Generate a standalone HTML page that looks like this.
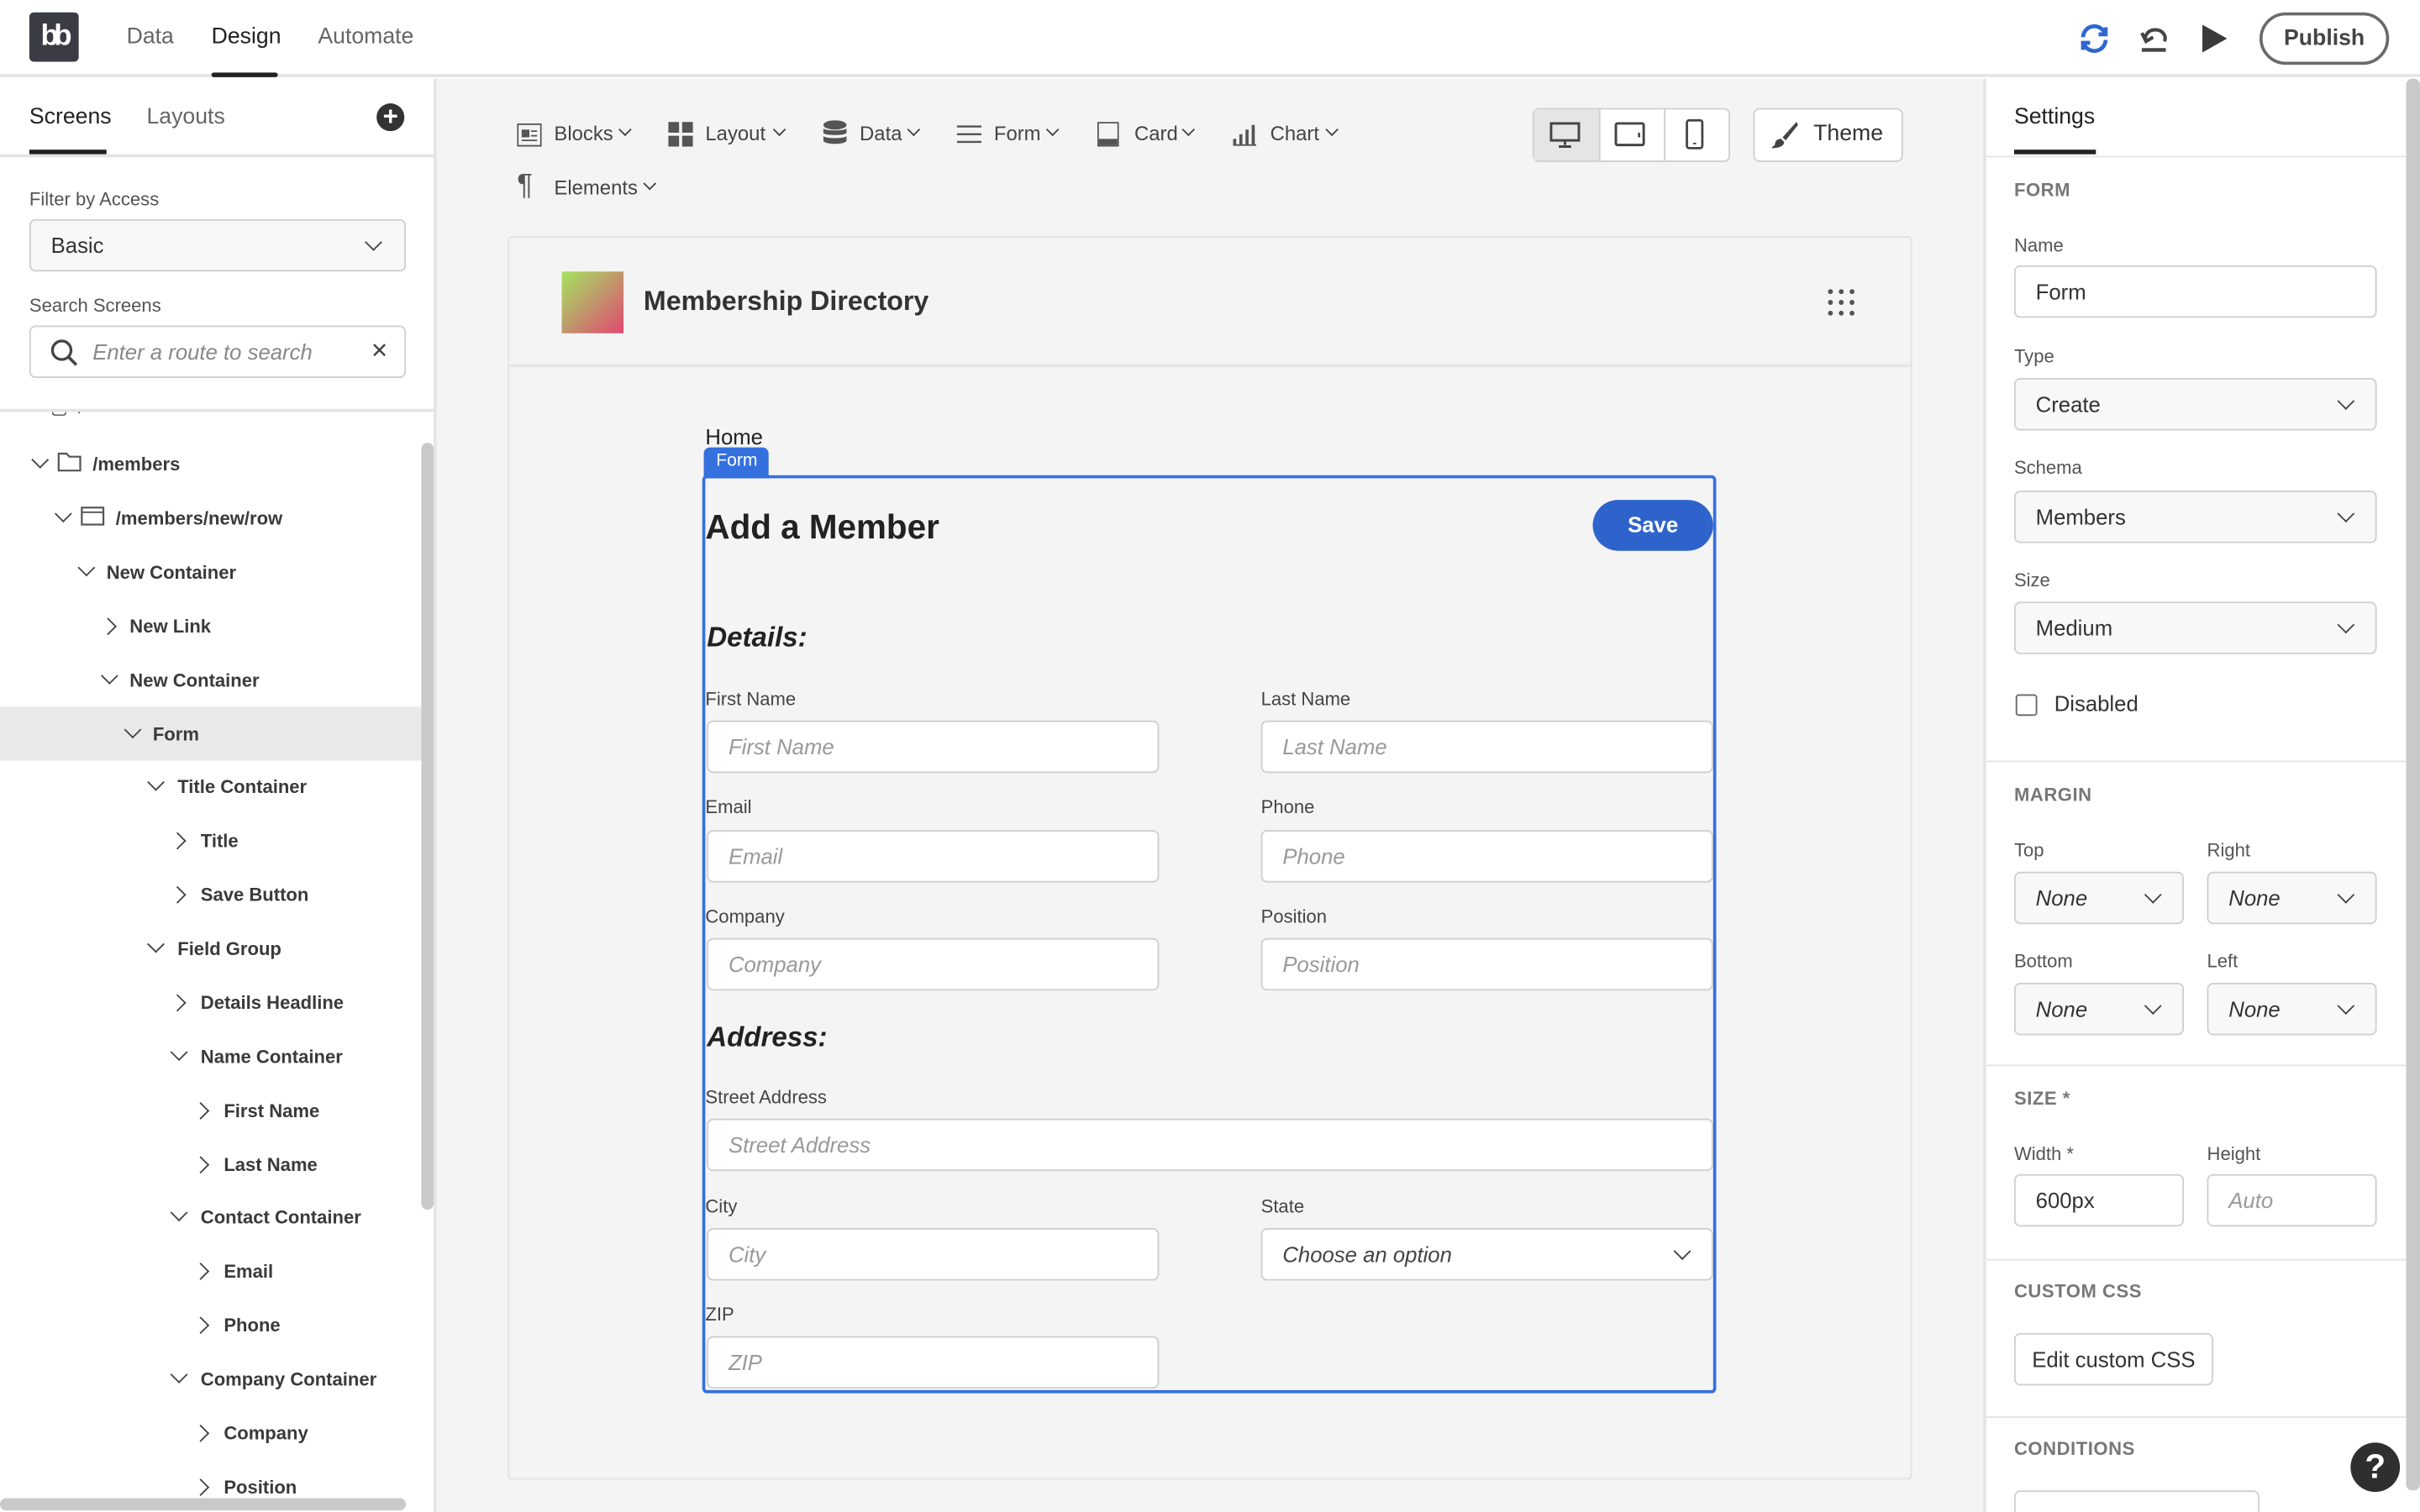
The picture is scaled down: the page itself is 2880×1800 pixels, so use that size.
<!DOCTYPE html>
<html><head><meta charset="utf-8"><style>
*{box-sizing:border-box;margin:0;padding:0}
html,body{width:2880px;height:1800px;overflow:hidden;background:#fff}
#w{position:absolute;left:0;top:0;width:1568px;height:980px;transform:scale(1.836735);transform-origin:0 0;font-family:"Liberation Sans",sans-serif;color:#2c2c2c;font-size:13px;overflow:hidden}
.a{position:absolute}
.t{position:absolute;white-space:nowrap}
.inp{position:absolute;background:#fff;border:1px solid #cfcfcf;border-radius:4px;height:34px;font-size:14px;line-height:32px;padding-left:13px;color:#999;font-style:italic}
.sel{position:absolute;background:#f8f8f8;border:1px solid #cfcfcf;border-radius:4px;height:34px;font-size:14px;line-height:32px;padding-left:13px;color:#333}
.chev{position:absolute;width:8px;height:8px;border-right:1.6px solid #444;border-bottom:1.6px solid #444;transform:rotate(45deg)}
.tr{position:absolute;font-size:12px;font-weight:bold;color:#3a3a3a;white-space:nowrap}
.lbl{position:absolute;font-size:12px;color:#444;white-space:nowrap}
.sl{position:absolute;font-size:12px;color:#555;white-space:nowrap}
.sh{position:absolute;font-size:12px;font-weight:bold;color:#777;letter-spacing:.3px}
</style></head><body><div id="w">
<!-- top bar -->
<div class="a" style="left:0;top:0;width:1568px;height:50px;border-bottom:2px solid #e4e4e4;background:#fff"></div>
<div class="a" style="left:19px;top:8px;width:32px;height:32px;background:#393c44;border-radius:3px;color:#fff;font-weight:bold;font-size:19px;line-height:31px;text-align:center;letter-spacing:-3px">bb</div>
<div class="t" style="left:82px;top:16px;font-size:14.5px;color:#666">Data</div>
<div class="t" style="left:137px;top:16px;font-size:14.5px;color:#222">Design</div>
<div class="a" style="left:137px;top:47px;width:43px;height:3px;background:#222;border-radius:2px"></div>
<div class="t" style="left:206px;top:16px;font-size:14.5px;color:#666">Automate</div>
<svg class="a" style="left:1346px;top:14px" width="22" height="22" viewBox="0 0 24 24"><path d="M4 11a8 8 0 0 1 14-5l2 2M20 4v5h-5M20 13a8 8 0 0 1-14 5l-2-2M4 20v-5h5" fill="none" stroke="#2f66d0" stroke-width="2.8"/></svg>
<svg class="a" style="left:1385px;top:14px" width="22" height="22" viewBox="0 0 24 24"><path d="M6 14a7 6 0 1 1 13 0M3 8l3 6 5-3" fill="none" stroke="#444" stroke-width="2.4"/><path d="M3 20h17" stroke="#444" stroke-width="2.6"/></svg>
<svg class="a" style="left:1426px;top:15px" width="18" height="20" viewBox="0 0 18 20"><path d="M1 1l16 9-16 9z" fill="#3a3a3a"/></svg>
<div class="a" style="left:1464px;top:8px;width:84px;height:34px;border:2px solid #6a6a6a;border-radius:17px;font-size:14.5px;font-weight:bold;color:#444;text-align:center;line-height:30px">Publish</div>

<!-- left panel -->
<div class="a" style="left:0;top:51px;width:283px;height:929px;background:#fff;border-right:2px solid #e4e4e4"></div>
<div class="tr" style="left:22px;top:257px;font-weight:normal">›&nbsp;&nbsp;▢&nbsp;&nbsp;/</div>
<div class="a" style="left:0;top:100px;width:281px;height:167px;background:#fff"></div>
<div class="t" style="left:19px;top:68px;font-size:14.5px;color:#222">Screens</div>
<div class="a" style="left:19px;top:97px;width:50px;height:3px;background:#222"></div>
<div class="t" style="left:95px;top:68px;font-size:14.5px;color:#666">Layouts</div>
<div class="a" style="left:244px;top:67px;width:18px;height:18px;border-radius:50%;background:#333;color:#fff;font-weight:bold;font-size:17px;line-height:17px;text-align:center">+</div>
<div class="a" style="left:0;top:100px;width:281px;height:2px;background:#e4e4e4"></div>
<div class="lbl" style="left:19px;top:122px;color:#555">Filter by Access</div>
<div class="sel" style="left:19px;top:142px;width:244px;background:#f8f8f8">Basic</div>
<div class="chev" style="left:238px;top:153px"></div>
<div class="lbl" style="left:19px;top:191px;color:#555">Search Screens</div>
<div class="inp" style="left:19px;top:211px;width:244px;padding-left:40px;font-size:14px;color:#888">Enter a route to search</div>
<svg class="a" style="left:32px;top:219px" width="20" height="20" viewBox="0 0 20 20"><circle cx="8" cy="8" r="6" fill="none" stroke="#444" stroke-width="1.8"/><path d="M12.5 12.5l5 5" stroke="#444" stroke-width="2"/></svg>
<div class="t" style="left:240px;top:219px;font-size:14px;color:#444">✕</div>
<div class="a" style="left:0;top:265px;width:281px;height:2px;background:#e4e4e4"></div>
<div class="a" style="left:273px;top:287px;width:8px;height:497px;background:#c9c9c9;border-radius:4px"></div>
<div class="a" style="left:0;top:971px;width:263px;height:8px;background:#c9c9c9;border-radius:4px"></div>
<div class="a" style="left:0;top:458px;width:273px;height:35px;background:#e9e9e9"></div>
<!-- tree -->
<div class="chev" style="left:22px;top:294px"></div><svg class="a" style="left:37px;top:293px" width="16" height="13"><path d="M1 1h5l2 2h7v9H1z" fill="none" stroke="#555" stroke-width="1.2"/></svg><div class="tr" style="left:60px;top:294px">/members</div>
<div class="chev" style="left:37px;top:329px"></div><svg class="a" style="left:52px;top:328px" width="16" height="13"><rect x="1" y="1" width="14" height="11" fill="none" stroke="#555" stroke-width="1.2"/><path d="M1 4h14" stroke="#555"/></svg><div class="tr" style="left:75px;top:329px">/members/new/row</div>
<div class="chev" style="left:52px;top:364px"></div><div class="tr" style="left:69px;top:364px">New Container</div>
<div class="chev" style="left:66px;top:402px;transform:rotate(-45deg)"></div><div class="tr" style="left:84px;top:399px">New Link</div>
<div class="chev" style="left:67px;top:434px"></div><div class="tr" style="left:84px;top:434px">New Container</div>
<div class="chev" style="left:82px;top:469px"></div><div class="tr" style="left:99px;top:469px">Form</div>
<div class="chev" style="left:97px;top:503px"></div><div class="tr" style="left:115px;top:503px">Title Container</div>
<div class="chev" style="left:111px;top:541px;transform:rotate(-45deg)"></div><div class="tr" style="left:130px;top:538px">Title</div>
<div class="chev" style="left:111px;top:576px;transform:rotate(-45deg)"></div><div class="tr" style="left:130px;top:573px">Save Button</div>
<div class="chev" style="left:97px;top:608px"></div><div class="tr" style="left:115px;top:608px">Field Group</div>
<div class="chev" style="left:111px;top:646px;transform:rotate(-45deg)"></div><div class="tr" style="left:130px;top:643px">Details Headline</div>
<div class="chev" style="left:112px;top:678px"></div><div class="tr" style="left:130px;top:678px">Name Container</div>
<div class="chev" style="left:126px;top:716px;transform:rotate(-45deg)"></div><div class="tr" style="left:145px;top:713px">First Name</div>
<div class="chev" style="left:126px;top:751px;transform:rotate(-45deg)"></div><div class="tr" style="left:145px;top:748px">Last Name</div>
<div class="chev" style="left:112px;top:782px"></div><div class="tr" style="left:130px;top:782px">Contact Container</div>
<div class="chev" style="left:126px;top:820px;transform:rotate(-45deg)"></div><div class="tr" style="left:145px;top:817px">Email</div>
<div class="chev" style="left:126px;top:855px;transform:rotate(-45deg)"></div><div class="tr" style="left:145px;top:852px">Phone</div>
<div class="chev" style="left:112px;top:887px"></div><div class="tr" style="left:130px;top:887px">Company Container</div>
<div class="chev" style="left:126px;top:925px;transform:rotate(-45deg)"></div><div class="tr" style="left:145px;top:922px">Company</div>
<div class="chev" style="left:126px;top:960px;transform:rotate(-45deg)"></div><div class="tr" style="left:145px;top:957px">Position</div>

<!-- center -->
<div class="a" style="left:283px;top:51px;width:1002px;height:929px;background:#f4f4f4"></div>
<svg class="a" style="left:335px;top:80px" width="16" height="15"><rect x=".5" y=".5" width="15" height="14" fill="none" stroke="#555"/><rect x="3" y="4" width="5" height="5" fill="#555"/><path d="M9 5h4M9 8h4M3 11h10" stroke="#555"/></svg>
<div class="t" style="left:359px;top:79px;color:#444">Blocks</div><div class="chev" style="left:402px;top:81px;width:6px;height:6px"></div>
<svg class="a" style="left:433px;top:79px" width="16" height="16"><rect width="7" height="7" fill="#555"/><rect x="9" width="7" height="7" fill="#555"/><rect y="9" width="7" height="7" fill="#555"/><rect x="9" y="9" width="7" height="7" fill="#555"/></svg>
<div class="t" style="left:457px;top:79px;color:#444">Layout</div><div class="chev" style="left:502px;top:81px;width:6px;height:6px"></div>
<svg class="a" style="left:533px;top:78px" width="16" height="17"><ellipse cx="8" cy="3" rx="7.5" ry="3" fill="#555"/><path d="M.5 5v3c0 2 15 2 15 0V5c0 2-15 2-15 0zM.5 10v3c0 3 15 3 15 0v-3c0 2-15 2-15 0z" fill="#555"/></svg>
<div class="t" style="left:557px;top:79px;color:#444">Data</div><div class="chev" style="left:589px;top:81px;width:6px;height:6px"></div>
<svg class="a" style="left:620px;top:81px" width="16" height="13"><path d="M0 1h16M0 6h16M0 11h16" stroke="#555" stroke-width="1.3"/></svg>
<div class="t" style="left:644px;top:79px;color:#444">Form</div><div class="chev" style="left:679px;top:81px;width:6px;height:6px"></div>
<svg class="a" style="left:711px;top:79px" width="14" height="16"><rect x=".5" y=".5" width="13" height="15" fill="none" stroke="#555"/><rect x="1" y="11" width="12" height="4" fill="#555"/></svg>
<div class="t" style="left:735px;top:79px;color:#444">Card</div><div class="chev" style="left:767px;top:81px;width:6px;height:6px"></div>
<svg class="a" style="left:798px;top:80px" width="16" height="15"><path d="M1 14h15" stroke="#555"/><rect x="1" y="10" width="2" height="4" fill="#555"/><rect x="5" y="7" width="2" height="7" fill="#555"/><rect x="9" y="4" width="2" height="10" fill="#555"/><rect x="13" y="1" width="2" height="13" fill="#555"/></svg>
<div class="t" style="left:823px;top:79px;color:#444">Chart</div><div class="chev" style="left:860px;top:81px;width:6px;height:6px"></div>
<div class="t" style="left:335px;top:110px;font-size:19px;color:#555">¶</div>
<div class="t" style="left:359px;top:114px;color:#444">Elements</div><div class="chev" style="left:418px;top:116px;width:6px;height:6px"></div>
<!-- device buttons -->
<div class="a" style="left:993px;top:70px;width:128px;height:35px;border:1px solid #cfcfcf;border-radius:4px;background:#fff"></div>
<div class="a" style="left:994px;top:71px;width:42px;height:33px;background:#e5e5e5"></div>
<div class="a" style="left:1036px;top:71px;width:1px;height:33px;background:#cfcfcf"></div>
<div class="a" style="left:1078px;top:71px;width:1px;height:33px;background:#cfcfcf"></div>
<svg class="a" style="left:1004px;top:79px" width="20" height="17"><rect x="1" y="1" width="18" height="11" fill="none" stroke="#444" stroke-width="1.6"/><path d="M10 12v3M6 16h8" stroke="#444" stroke-width="1.6"/></svg>
<svg class="a" style="left:1046px;top:79px" width="20" height="16"><rect x="1" y="1" width="18" height="14" rx="1" fill="none" stroke="#444" stroke-width="1.6"/><path d="M16 7v3" stroke="#444" stroke-width="1.4"/></svg>
<svg class="a" style="left:1092px;top:77px" width="12" height="20"><rect x="1" y="1" width="10" height="18" rx="1.5" fill="none" stroke="#444" stroke-width="1.5"/><path d="M5 16h2" stroke="#444"/></svg>
<div class="a" style="left:1136px;top:70px;width:97px;height:35px;border:1px solid #cfcfcf;border-radius:4px;background:#fff"></div>
<svg class="a" style="left:1147px;top:78px" width="19" height="19"><path d="M17 1L8 11l2 2L18 3z" fill="#444"/><path d="M7 12c-3 0-4 2-4 4-1 1-2 1-2 2 4 0 8-1 8-4z" fill="#444"/></svg>
<div class="t" style="left:1175px;top:79px;font-size:14.5px;color:#333">Theme</div>

<!-- preview -->
<div class="a" style="left:329px;top:153px;width:910px;height:806px;background:#f4f4f4;border:1px solid #e2e2e2;border-radius:3px"></div>
<div class="a" style="left:330px;top:236px;width:908px;height:2px;background:#e6e6e6"></div>
<div class="a" style="left:364px;top:176px;width:40px;height:40px;background:linear-gradient(135deg,#a6e35e,#c0976c 50%,#e2476f)"></div>
<div class="t" style="left:417px;top:185px;font-size:17.5px;font-weight:bold;color:#333">Membership Directory</div>
<svg class="a" style="left:1184px;top:187px" width="18" height="18"><g fill="#555"><circle cx="2" cy="2" r="1.6"/><circle cx="9" cy="2" r="1.6"/><circle cx="16" cy="2" r="1.6"/><circle cx="2" cy="9" r="1.6"/><circle cx="9" cy="9" r="1.6"/><circle cx="16" cy="9" r="1.6"/><circle cx="2" cy="16" r="1.6"/><circle cx="9" cy="16" r="1.6"/><circle cx="16" cy="16" r="1.6"/></g></svg>
<div class="t" style="left:457px;top:275px;font-size:14px;color:#222">Home</div>
<div class="a" style="left:456px;top:290px;width:42px;height:20px;background:#3470de;border-radius:4px 4px 0 0;color:#fff;font-size:11.5px;padding-left:8px;line-height:18px">Form</div>
<div class="a" style="left:455px;top:308px;width:657px;height:595px;border:2px solid #3470de;border-radius:3px"></div>
<div class="t" style="left:457px;top:329px;font-size:22px;font-weight:bold;color:#222">Add a Member</div>
<div class="a" style="left:1032px;top:324px;width:78px;height:33px;background:#2f63cc;border-radius:17px;color:#fff;font-weight:bold;font-size:14px;text-align:center;line-height:33px">Save</div>
<div class="t" style="left:458px;top:403px;font-size:18px;font-weight:bold;font-style:italic;color:#222">Details:</div>
<div class="lbl" style="left:457px;top:446px">First Name</div><div class="inp" style="left:458px;top:467px;width:293px">First Name</div>
<div class="lbl" style="left:817px;top:446px">Last Name</div><div class="inp" style="left:817px;top:467px;width:293px">Last Name</div>
<div class="lbl" style="left:457px;top:516px">Email</div><div class="inp" style="left:458px;top:538px;width:293px">Email</div>
<div class="lbl" style="left:817px;top:516px">Phone</div><div class="inp" style="left:817px;top:538px;width:293px">Phone</div>
<div class="lbl" style="left:457px;top:587px">Company</div><div class="inp" style="left:458px;top:608px;width:293px">Company</div>
<div class="lbl" style="left:817px;top:587px">Position</div><div class="inp" style="left:817px;top:608px;width:293px">Position</div>
<div class="t" style="left:458px;top:662px;font-size:18px;font-weight:bold;font-style:italic;color:#222">Address:</div>
<div class="lbl" style="left:457px;top:704px">Street Address</div><div class="inp" style="left:458px;top:725px;width:652px">Street Address</div>
<div class="lbl" style="left:457px;top:775px">City</div><div class="inp" style="left:458px;top:796px;width:293px">City</div>
<div class="lbl" style="left:817px;top:775px">State</div><div class="inp" style="left:817px;top:796px;width:293px;color:#444">Choose an option</div>
<div class="chev" style="left:1086px;top:807px"></div>
<div class="lbl" style="left:457px;top:845px">ZIP</div><div class="inp" style="left:458px;top:866px;width:293px">ZIP</div>

<!-- right panel -->
<div class="a" style="left:1285px;top:51px;width:283px;height:929px;background:#fff;border-left:2px solid #e4e4e4"></div>
<div class="a" style="left:1559px;top:51px;width:9px;height:915px;background:#c9c9c9;border-radius:4px"></div>
<div class="t" style="left:1305px;top:68px;font-size:14.5px;color:#222">Settings</div>
<div class="a" style="left:1305px;top:97px;width:53px;height:3px;background:#222"></div>
<div class="a" style="left:1287px;top:101px;width:272px;height:1px;background:#e4e4e4"></div>
<div class="sh" style="left:1305px;top:116px">FORM</div>
<div class="sl" style="left:1305px;top:152px">Name</div>
<div class="inp" style="left:1305px;top:172px;width:235px;font-style:normal;color:#333">Form</div>
<div class="sl" style="left:1305px;top:224px">Type</div>
<div class="sel" style="left:1305px;top:245px;width:235px">Create</div><div class="chev" style="left:1516px;top:256px"></div>
<div class="sl" style="left:1305px;top:296px">Schema</div>
<div class="sel" style="left:1305px;top:318px;width:235px">Members</div><div class="chev" style="left:1516px;top:329px"></div>
<div class="sl" style="left:1305px;top:369px">Size</div>
<div class="sel" style="left:1305px;top:390px;width:235px">Medium</div><div class="chev" style="left:1516px;top:401px"></div>
<div class="a" style="left:1306px;top:450px;width:14px;height:14px;border:1.5px solid #666;border-radius:2px"></div>
<div class="t" style="left:1331px;top:448px;font-size:14px;color:#333">Disabled</div>
<div class="a" style="left:1287px;top:493px;width:272px;height:1px;background:#e4e4e4"></div>
<div class="sh" style="left:1305px;top:508px">MARGIN</div>
<div class="sl" style="left:1305px;top:544px">Top</div><div class="sl" style="left:1430px;top:544px">Right</div>
<div class="sel" style="left:1305px;top:565px;width:110px;font-style:italic">None</div><div class="chev" style="left:1391px;top:576px"></div>
<div class="sel" style="left:1430px;top:565px;width:110px;font-style:italic">None</div><div class="chev" style="left:1516px;top:576px"></div>
<div class="sl" style="left:1305px;top:616px">Bottom</div><div class="sl" style="left:1430px;top:616px">Left</div>
<div class="sel" style="left:1305px;top:637px;width:110px;font-style:italic">None</div><div class="chev" style="left:1391px;top:648px"></div>
<div class="sel" style="left:1430px;top:637px;width:110px;font-style:italic">None</div><div class="chev" style="left:1516px;top:648px"></div>
<div class="a" style="left:1287px;top:690px;width:272px;height:1px;background:#e4e4e4"></div>
<div class="sh" style="left:1305px;top:705px">SIZE *</div>
<div class="sl" style="left:1305px;top:741px">Width *</div><div class="sl" style="left:1430px;top:741px">Height</div>
<div class="inp" style="left:1305px;top:761px;width:110px;font-style:normal;color:#333">600px</div>
<div class="inp" style="left:1430px;top:761px;width:110px">Auto</div>
<div class="a" style="left:1287px;top:816px;width:272px;height:1px;background:#e4e4e4"></div>
<div class="sh" style="left:1305px;top:830px">CUSTOM CSS</div>
<div class="a" style="left:1305px;top:864px;width:129px;height:34px;border:1px solid #cfcfcf;border-radius:4px;background:#fff;font-size:14px;color:#333;text-align:center;line-height:32px">Edit custom CSS</div>
<div class="a" style="left:1287px;top:918px;width:272px;height:1px;background:#e4e4e4"></div>
<div class="sh" style="left:1305px;top:932px">CONDITIONS</div>
<div class="a" style="left:1305px;top:966px;width:159px;height:34px;border:1px solid #cfcfcf;border-radius:4px;background:#fff"></div>
<div class="a" style="left:1523px;top:935px;width:32px;height:32px;border-radius:50%;background:#2f2f2f;color:#fff;font-weight:bold;font-size:22px;text-align:center;line-height:32px">?</div>
</div></body></html>
